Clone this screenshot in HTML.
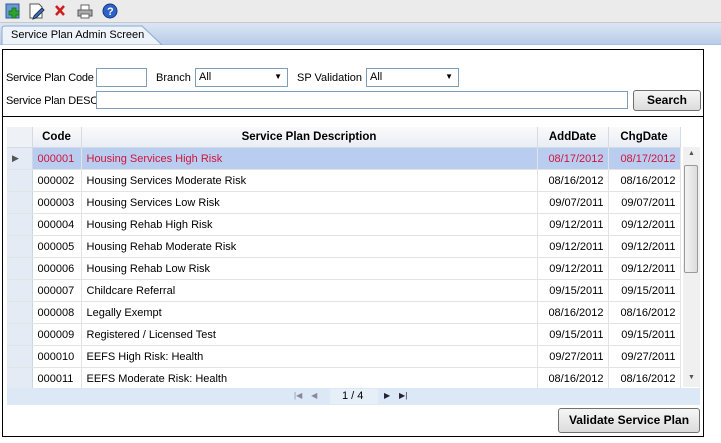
<!DOCTYPE html>
<html><head><style>
body{margin:0;width:721px;height:443px;background:#fff;font-family:"Liberation Sans",sans-serif;font-size:11px;position:relative;overflow:hidden;color:#000}
.a{position:absolute}
.tb{left:0;top:0;width:721px;height:22px;background:#ebebeb;border-bottom:1px solid #c8c8c8}
.strip{left:0;top:23px;width:721px;height:21px;background:linear-gradient(#dbe6f4,#b9cde8);border-bottom:1px solid #a9bfdc}
.panel{left:2px;top:49px;width:700px;height:386px;border:1px solid #000}
input,.sel{position:absolute;border:1px solid #7f9db9;height:18px;box-sizing:border-box;background:#fff;font-size:11px;padding:2px 3px;font-family:"Liberation Sans",sans-serif}
.btn{position:absolute;border:1px solid #707070;border-radius:3px;background:linear-gradient(#f6f6f6,#dcdcdc);font-weight:bold;text-align:center;box-sizing:border-box;font-size:12px}
table{border-collapse:collapse;position:absolute;left:7px;top:127px;table-layout:fixed;width:673px}
td{height:21px;border-bottom:1px solid #e3e3e3;border-right:1px solid #e3e3e3;padding:0 4px 0 5px;white-space:nowrap;overflow:hidden;font-size:11px}
th{height:20px;background:linear-gradient(#fafafa,#e9eef5);border-right:1px solid #d5dbe4;border-bottom:1px solid #d5dbe4;font-weight:bold;padding:0;font-size:11.5px}
td.i{background:#e4ebf5;border-right:1px solid #cfd6df}
tr.s td{background:#b8cdf0;color:#d2143a}
.r{text-align:right}
</style></head><body>
<div class="a tb"></div>
<svg class="a" style="left:4px;top:2px" width="120" height="18">
<rect x="2" y="2" width="13" height="14" fill="#6c9bd4" stroke="#2d5d9a"/><path d="M8 6h4v3h3v4h-3v3h-4v-3h-3v-4h3z" fill="#2ea32e" stroke="#136b13" stroke-width=".7"/>
<path d="M26 2h9l3 3v11h-12z" fill="#fff" stroke="#555"/><path d="M30 14l8-8 2 2-8 8-3 1z" fill="#3a6fc4" stroke="#234"/>
<path d="M52 4l8 9M60 4l-8 9" stroke="#d21c1c" stroke-width="2.5"/>
<rect x="74" y="8" width="14" height="6" fill="#aaa" stroke="#555"/><rect x="77" y="3" width="8" height="5" fill="#fff" stroke="#666"/><rect x="77" y="12" width="8" height="4" fill="#fff" stroke="#666"/>
<circle cx="106" cy="9" r="7" fill="#2e62c8" stroke="#173a80"/><text x="103" y="13" font-size="11" font-weight="bold" fill="#fff" font-family="Liberation Sans">?</text>
</svg>
<div class="a strip"></div>
<svg class="a" style="left:0;top:25px" width="170" height="20"><path d="M2 20V4Q2 1 5 1H142L162 20Z" fill="#eef3fa" stroke="#8ea9cc"/></svg>
<div class="a" style="left:11px;top:29px;font-size:11px">Service Plan Admin Screen</div>
<div class="a panel"></div>
<div class="a" style="left:6px;top:72px;letter-spacing:-0.2px">Service Plan Code</div>
<input style="left:96px;top:68px;width:51px;height:19px">
<div class="a" style="left:156px;top:72px">Branch</div>
<div class="sel" style="left:195px;top:68px;width:93px;height:19px">All<span style="position:absolute;right:5px;top:3px;font-size:8px">▼</span></div>
<div class="a" style="left:297px;top:72px">SP Validation</div>
<div class="sel" style="left:366px;top:68px;width:93px;height:19px">All<span style="position:absolute;right:5px;top:3px;font-size:8px">▼</span></div>
<div class="a" style="left:6px;top:95px;letter-spacing:-0.2px">Service Plan DESC</div>
<input style="left:96px;top:91px;width:532px;height:18px">
<div class="btn" style="left:633px;top:90px;width:68px;height:21px;line-height:19px">Search</div>
<div class="a" style="left:3px;top:116px;width:700px;border-top:1px solid #000"></div>
<table>
<colgroup><col style="width:25px"><col style="width:49px"><col style="width:456px"><col style="width:71px"><col style="width:72px"></colgroup>
<tr><th style="background:#eef1f6"></th><th>Code</th><th>Service Plan Description</th><th>AddDate</th><th>ChgDate</th></tr>
<tr class="s"><td class="i" style="background:#e4ebf5;color:#555;font-size:9px">▶</td><td>000001</td><td>Housing Services High Risk</td><td class="r">08/17/2012</td><td class="r">08/17/2012</td></tr>
<tr><td class="i"></td><td>000002</td><td>Housing Services Moderate Risk</td><td class="r">08/16/2012</td><td class="r">08/16/2012</td></tr>
<tr><td class="i"></td><td>000003</td><td>Housing Services Low Risk</td><td class="r">09/07/2011</td><td class="r">09/07/2011</td></tr>
<tr><td class="i"></td><td>000004</td><td>Housing Rehab High Risk</td><td class="r">09/12/2011</td><td class="r">09/12/2011</td></tr>
<tr><td class="i"></td><td>000005</td><td>Housing Rehab Moderate Risk</td><td class="r">09/12/2011</td><td class="r">09/12/2011</td></tr>
<tr><td class="i"></td><td>000006</td><td>Housing Rehab Low Risk</td><td class="r">09/12/2011</td><td class="r">09/12/2011</td></tr>
<tr><td class="i"></td><td>000007</td><td>Childcare Referral</td><td class="r">09/15/2011</td><td class="r">09/15/2011</td></tr>
<tr><td class="i"></td><td>000008</td><td>Legally Exempt</td><td class="r">08/16/2012</td><td class="r">08/16/2012</td></tr>
<tr><td class="i"></td><td>000009</td><td>Registered / Licensed Test</td><td class="r">09/15/2011</td><td class="r">09/15/2011</td></tr>
<tr><td class="i"></td><td>000010</td><td>EEFS High Risk: Health</td><td class="r">09/27/2011</td><td class="r">09/27/2011</td></tr>
<tr><td class="i"></td><td>000011</td><td>EEFS Moderate Risk: Health</td><td class="r">08/16/2012</td><td class="r">08/16/2012</td></tr>
</table>
<div class="a" style="left:683px;top:147px;width:17px;height:240px;background:#f0f0f0"></div>
<div class="a" style="left:684px;top:165px;width:14px;height:108px;border:1px solid #999;border-radius:2px;background:linear-gradient(90deg,#f4f4f4,#dcdcdc);box-sizing:border-box"></div>
<div class="a" style="left:688px;top:150px;font-size:7px;color:#555">▲</div>
<div class="a" style="left:688px;top:374px;font-size:7px;color:#555">▼</div>
<div class="a" style="left:7px;top:388px;width:693px;height:17px;background:#dce8f6"></div>
<div class="a" style="left:330px;top:389px;width:48px;height:15px;background:#e6eef8"></div>
<div class="a" style="left:294px;top:391px;font-size:8px;color:#889">|◀ &nbsp;&nbsp; ◀</div>
<div class="a" style="left:342px;top:390px">1 / 4</div>
<div class="a" style="left:384px;top:391px;font-size:8px;color:#223">▶ &nbsp;&nbsp; ▶|</div>
<div class="btn" style="left:558px;top:408px;width:142px;height:25px;line-height:23px">Validate Service Plan</div>
</body></html>
